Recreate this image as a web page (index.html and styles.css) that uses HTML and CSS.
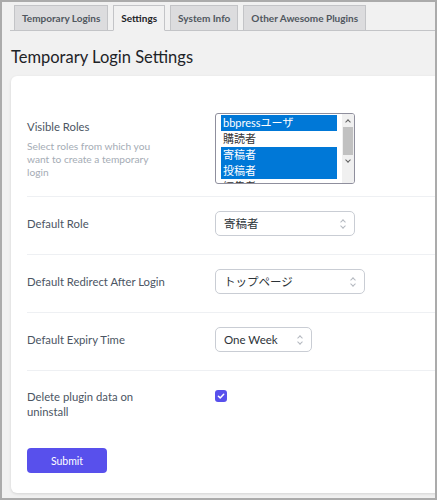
FILE: index.html
```html
<!DOCTYPE html>
<html lang="ja">
<head>
  <meta charset="UTF-8">
  <title>Temporary Login Settings</title>
  <link rel="stylesheet" href="styles.css">
</head>
<body>
  <div class="frame">
    <div class="wrap">
      <!-- Tabs -->
      <nav class="tabs">
        <a class="tab">Temporary Logins</a>
        <a class="tab active">Settings</a>
        <a class="tab">System Info</a>
        <a class="tab">Other Awesome Plugins</a>
      </nav>

      <h1>Temporary Login Settings</h1>

      <form class="card">
        <!-- Visible Roles -->
        <div class="row row-roles">
          <div class="label">
            <div class="name">Visible Roles</div>
            <p class="desc">Select roles from which you want to create a temporary login</p>
          </div>
          <div class="listbox">
            <div class="options">
              <div class="opt selected">bbpressユーザ</div>
              <div class="opt">購読者</div>
              <div class="opt selected">寄稿者</div>
              <div class="opt selected">投稿者</div>
              <div class="opt">編集者</div>
            </div>
            <div class="scrollbar">
              <span class="arrow up"></span>
              <span class="thumb"></span>
              <span class="arrow down"></span>
            </div>
          </div>
        </div>

        <!-- Default Role -->
        <div class="row">
          <div class="label"><div class="name">Default Role</div></div>
          <div class="select w-role">寄稿者<span class="updown"></span></div>
        </div>

        <!-- Redirect -->
        <div class="row">
          <div class="label"><div class="name">Default Redirect After Login</div></div>
          <div class="select w-redirect">トップページ<span class="updown"></span></div>
        </div>

        <!-- Expiry -->
        <div class="row">
          <div class="label"><div class="name">Default Expiry Time</div></div>
          <div class="select w-expiry">One Week<span class="updown"></span></div>
        </div>

        <!-- Delete data -->
        <div class="row row-check">
          <div class="label"><div class="name">Delete plugin data on uninstall</div></div>
          <span class="checkbox">
            <svg viewBox="0 0 12 12" width="12" height="12"><path d="M3.4 6.2l1.8 1.7 3.5-3.6" fill="none" stroke="#fff" stroke-width="1.5" stroke-linecap="round" stroke-linejoin="round"/></svg>
          </span>
        </div>

        <button type="button" class="submit">Submit</button>
      </form>
    </div>
  </div>
</body>
</html>
```

FILE: styles.css
```css
html, body {
  margin: 0;
  height: 100%;
}
body {
  font-family: Lato, "Noto Sans CJK JP", sans-serif;
  background: #f1f1f1;
}
.frame {
  box-sizing: border-box;
  height: 500px;
  border: 2px solid #ababab;
  overflow: hidden;
}
.wrap {
  width: 520px;
  padding: 3px 0 0 8px;
}

/* tabs */
.tabs {
  display: flex;
  border-bottom: 1px solid #c3c4c7;
  padding-left: 4px;
  height: 25px;
}
.tab {
  box-sizing: border-box;
  height: 26px;
  margin-right: 5px;
  padding: 0 7px;
  border: 1px solid #c3c4c7;
  background: #dcdcde;
  color: #50575e;
  font-size: 10px;
  font-weight: 700;
  line-height: 24px;
}
.tab.active {
  background: #f1f1f1;
  border-bottom-color: #f1f1f1;
  color: #1d2327;
}

h1 {
  margin: 14px 0 0 1px;
  font-size: 16.5px;
  font-weight: 400;
  color: #1d2327;
  line-height: 24px;
}

/* card */
.card {
  margin: 7px 0 0 1px;
  background: #fff;
  border-radius: 6px;
  box-shadow: 0 1px 3px rgba(0,0,0,0.12);
  padding: 24px 0 20px 16px;
}
.row {
  display: grid;
  grid-template-columns: 188px 1fr;
  align-items: center;
  padding: 14px 0 18px;
  border-bottom: 1px solid #eef0f3;
}
.row-roles {
  padding: 13px 0 12px;
}
.row-check {
  align-items: start;
  padding: 18px 0 0;
  border-bottom: none;
}
.label {
  max-width: 146px;
}
.name {
  font-size: 11.3px;
  line-height: 15px;
  color: #4b5563;
}
.desc {
  margin: 6px 0 0;
  max-width: 140px;
  font-size: 10.2px;
  line-height: 13px;
  color: #a5acb5;
}

/* multi select */
.listbox {
  display: flex;
  width: 140px;
  height: 71px;
  box-sizing: border-box;
  border: 1px solid #8f8f9d;
  border-radius: 3px;
  overflow: hidden;
  background: #fff;
}
.options {
  flex: 1;
  padding: 1px 0 0 5px;
  overflow: hidden;
}
.opt {
  height: 16px;
  line-height: 16px;
  padding-left: 2px;
  font-size: 11px;
  color: #333;
  white-space: nowrap;
}
.opt.selected {
  background: #0078d7;
  color: #fff;
}
.scrollbar {
  width: 12px;
  margin-left: 5px;
  background: #f0f0f0;
  display: flex;
  flex-direction: column;
}
.arrow {
  height: 13px;
  position: relative;
}
.arrow::after {
  content: "";
  position: absolute;
  left: 4px;
  width: 3px;
  height: 3px;
  border-left: 1px solid #606060;
  border-top: 1px solid #606060;
}
.arrow.up::after {
  top: 6px;
  transform: rotate(45deg);
}
.arrow.down::after {
  top: 3px;
  transform: rotate(225deg);
}
.thumb {
  height: 28px;
  margin: 0 1px;
  background: #c1c1c1;
}

/* single selects */
.select {
  position: relative;
  box-sizing: border-box;
  height: 25px;
  padding: 0 8px;
  border: 1px solid #c9cdd4;
  border-radius: 5px;
  font-size: 11.5px;
  line-height: 23px;
  color: #2c3338;
}
.w-role { width: 140px; }
.w-redirect { width: 150px; }
.w-expiry { width: 97px; }
.updown {
  position: absolute;
  right: 9px;
  top: 8px;
  width: 4px;
  height: 8px;
}
.updown::before, .updown::after {
  content: "";
  position: absolute;
  left: 0;
  width: 3px;
  height: 3px;
  border-left: 1px solid #b3b8bf;
  border-top: 1px solid #b3b8bf;
}
.updown::before {
  top: 0;
  transform: rotate(45deg);
}
.updown::after {
  top: 4px;
  transform: rotate(225deg);
}

/* checkbox */
.checkbox {
  display: flex;
  width: 12px;
  height: 12px;
  border-radius: 3px;
  background: #5850ec;
  margin-top: 1px;
}

.submit {
  margin-top: 29px;
  width: 80px;
  height: 25px;
  border: none;
  border-radius: 4px;
  background: #5850ec;
  color: #fff;
  font-family: inherit;
  font-size: 10.5px;
  cursor: pointer;
}
```
